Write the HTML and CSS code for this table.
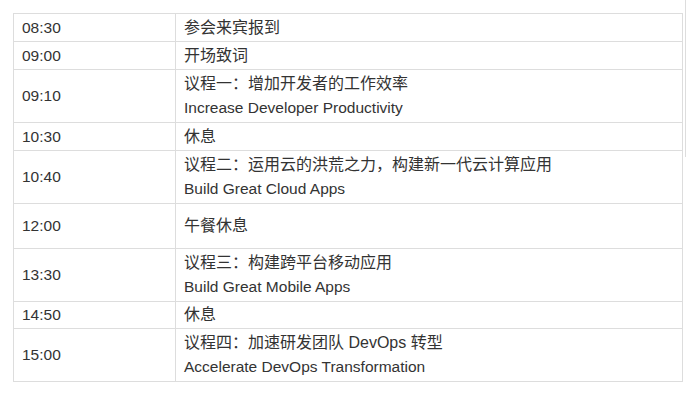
FILE: index.html
```html
<!DOCTYPE html>
<html lang="zh-CN">
<head>
<meta charset="utf-8">
<title>议程</title>
<link rel="stylesheet" href="styles.css">
</head>
<body>
<div class="edge"></div>
<table class="agenda">
  <colgroup><col class="c-time"><col class="c-item"></colgroup>
  <tr class="r1"><td>08:30</td><td><span class="zh">参会来宾报到</span></td></tr>
  <tr class="r1"><td>09:00</td><td><span class="zh">开场致词</span></td></tr>
  <tr class="r2"><td>09:10</td><td><span class="zh">议程一：增加开发者的工作效率</span><br>Increase Developer Productivity</td></tr>
  <tr class="r1"><td>10:30</td><td><span class="zh">休息</span></td></tr>
  <tr class="r2"><td>10:40</td><td><span class="zh">议程二：运用云的洪荒之力，构建新一代云计算应用</span><br>Build Great Cloud Apps</td></tr>
  <tr class="r-lunch"><td>12:00</td><td><span class="zh">午餐休息</span></td></tr>
  <tr class="r2b"><td>13:30</td><td><span class="zh">议程三：构建跨平台移动应用</span><br>Build Great Mobile Apps</td></tr>
  <tr class="r1s"><td>14:50</td><td><span class="zh">休息</span></td></tr>
  <tr class="r2"><td>15:00</td><td><span class="zh">议程四：加速研发团队 DevOps 转型</span><br>Accelerate DevOps Transformation</td></tr>
</table>
</body>
</html>
```

FILE: styles.css
```css
html, body {
  margin: 0;
  padding: 0;
  background: #fff;
}
body {
  padding: 13px 0 0 13px;
  font-family: "Liberation Sans", Arial, "Noto Sans CJK SC", sans-serif;
  font-size: 15.5px;
  color: #333;
}
.edge {
  position: absolute;
  left: 685px;
  top: -2px;
  width: 10px;
  height: 159px;
  border: 1px solid #ddd;
  box-sizing: border-box;
}
.agenda {
  border-collapse: collapse;
  width: 670px;
  table-layout: fixed;
}
.c-time { width: 162px; }
.agenda td {
  border: 1px solid #ddd;
  padding: 0 7px 0 8px;
  line-height: 24px;
  vertical-align: middle;
  box-sizing: border-box;
}
.zh {
  font-size: 16px;
}
.r1 td { height: 28px; }
.r1s td { height: 27px; }
.r2 td { height: 53px; }
.r2b td { height: 53px; }
.r-lunch td { height: 45px; }
```
